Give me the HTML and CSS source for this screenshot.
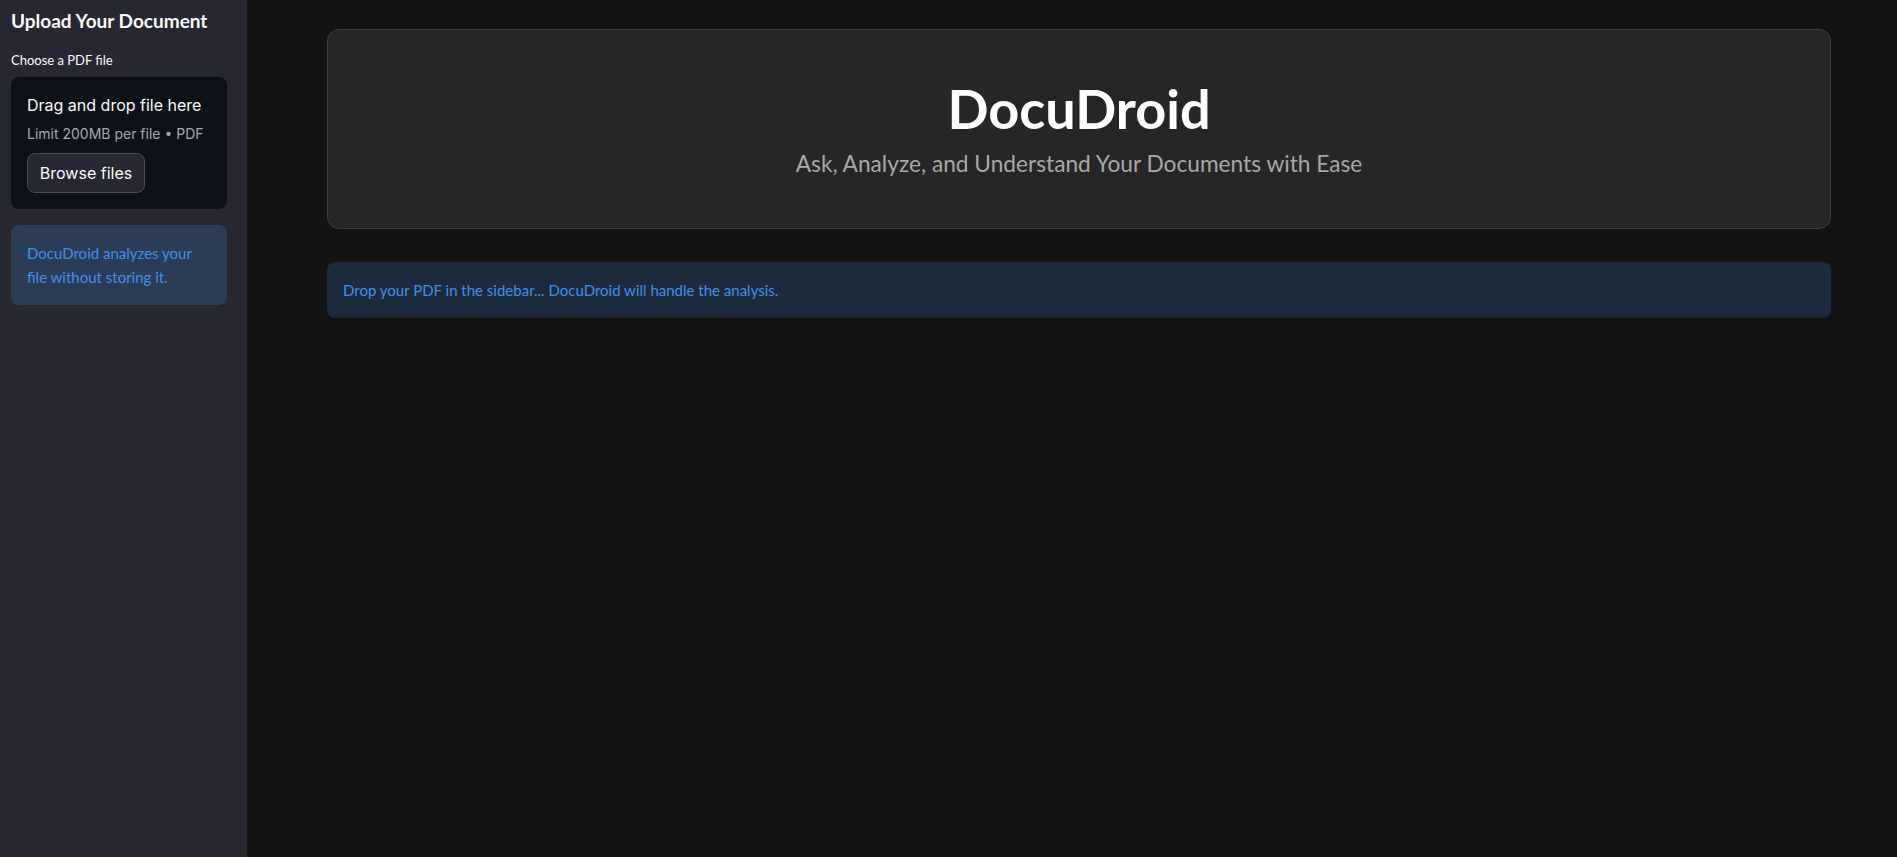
FILE: index.html
```html
<!DOCTYPE html>
<html lang="en">
<head>
<meta charset="utf-8">
<title>DocuDroid</title>
<link rel="stylesheet" href="styles.css">
</head>
<body>
<div class="app">
  <aside class="sidebar">
    <h2 class="side-title">Upload Your Document</h2>
    <div class="field-label">Choose a PDF file</div>
    <div class="dropzone">
      <div class="dz-title">Drag and drop file here</div>
      <div class="dz-limit">Limit 200MB per file • PDF</div>
      <button class="browse-btn" type="button">Browse files</button>
    </div>
    <div class="side-info">DocuDroid analyzes your file without storing it.</div>
  </aside>
  <main class="main">
    <section class="hero">
      <h1 class="hero-title">DocuDroid</h1>
      <p class="hero-sub">Ask, Analyze, and Understand Your Documents with Ease</p>
    </section>
    <div class="info-bar">Drop your PDF in the sidebar... DocuDroid will handle the analysis.</div>
  </main>
</div>
</body>
</html>
```
FILE: styles.css
```css
* { box-sizing: border-box; }
html, body {
  margin: 0;
  padding: 0;
  height: 100%;
  background: #131313;
  font-family: "Lato", "Noto Sans", sans-serif;
}
.app {
  display: flex;
  height: 100vh;
}
.sidebar {
  width: 247px;
  flex: 0 0 247px;
  background: #262730;
  padding: 8px 20px 0 11px;
}
.side-title {
  margin: 0;
  color: #fafafa;
  font-size: 19px;
  font-weight: 700;
  line-height: 26px;
}
.field-label {
  margin-top: 17px;
  color: #fafafa;
  font-size: 13px;
  line-height: 18px;
}
.dropzone {
  margin-top: 8px;
  background: #0e1117;
  border-radius: 8px;
  padding: 16px;
  font-family: "Inter", "Liberation Sans", sans-serif;
}
.dz-title {
  color: #fafafa;
  font-size: 16px;
  line-height: 24px;
}
.dz-limit {
  color: #a3a8b4;
  font-size: 14px;
  line-height: 20px;
  margin-top: 7px;
}
.browse-btn {
  margin-top: 9px;
  height: 40px;
  width: 118px;
  background: #262730;
  border: 1px solid #4a4c56;
  border-radius: 8px;
  color: #fafafa;
  font-family: "Inter", "Liberation Sans", sans-serif;
  font-size: 16px;
  padding: 0;
}
.side-info {
  margin-top: 16px;
  background: #2a3d55;
  border-radius: 8px;
  padding: 16px;
  color: #3d90ec;
  font-size: 15px;
  line-height: 24px;
}
.main {
  flex: 1;
  padding: 29px 66px 0 80px;
}
.hero {
  height: 200px;
  background: #262626;
  border: 1px solid #3d3d3d;
  border-radius: 12px;
  display: flex;
  flex-direction: column;
  align-items: center;
  justify-content: center;
}
.hero-title {
  margin: 0;
  color: #ffffff;
  font-size: 54px;
  font-weight: 700;
  line-height: 66px;
}
.hero-sub {
  margin: 7px 0 3px;
  color: #a8a8a8;
  font-size: 22.7px;
  line-height: 30px;
}
.info-bar {
  margin-top: 33px;
  background: #1c2b3c;
  border-radius: 8px;
  padding: 16px;
  color: #3d90ec;
  font-size: 15px;
  line-height: 24px;
}
```
